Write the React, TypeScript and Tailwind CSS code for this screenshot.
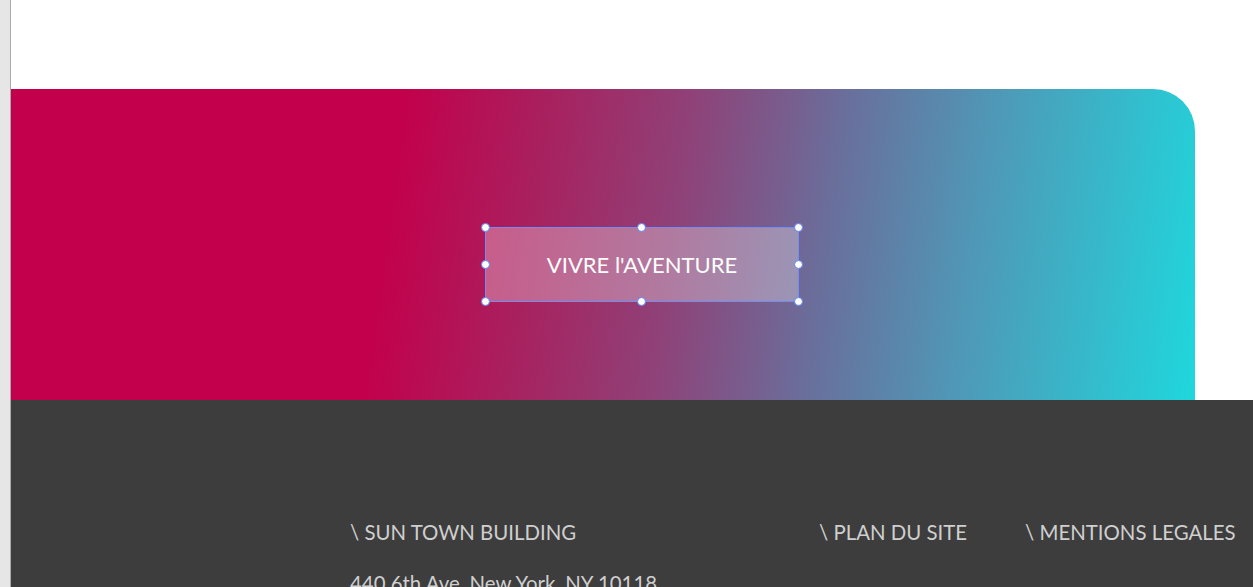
import React from "react";

const Handle = ({ className }: { className: string }) => (
  <span
    className={`absolute w-[9px] h-[9px] rounded-full bg-white border border-[#5b7ff0] ${className}`}
  />
);

export default function App() {
  return (
    <div
      className="flex w-[1253px] h-[587px] overflow-hidden bg-white"
      style={{ fontFamily: "Lato, 'Open Sans', sans-serif" }}
    >
      <div className="w-[11px] shrink-0 bg-[#e6e6e6] border-r border-[#a9a9a9]" />
      <div className="flex flex-col flex-1">
        <div className="h-[89px] shrink-0 bg-white" />
        <div
          className="h-[311px] shrink-0 w-[1184px] rounded-tr-[42px] pl-[474px] pt-[138px]"
          style={{
            background:
              "linear-gradient(98deg, #c3004b 0%, #c3004b 32%, #a8215f 44%, #8e4379 56%, #6a6e9b 68%, #4e9ab8 81%, #1fd7dd 100%)",
          }}
        >
          <div className="relative w-[314px] h-[75px] border border-[#6f8df5] bg-white/30 flex items-center justify-center">
            <span className="text-white text-[22px] leading-none pt-[1px]">
              VIVRE l'AVENTURE
            </span>
            <Handle className="-left-[5px] -top-[5px]" />
            <Handle className="left-[151px] -top-[5px]" />
            <Handle className="-right-[5px] -top-[5px]" />
            <Handle className="-left-[5px] top-[32px]" />
            <Handle className="-right-[5px] top-[32px]" />
            <Handle className="-left-[5px] -bottom-[5px]" />
            <Handle className="left-[151px] -bottom-[5px]" />
            <Handle className="-right-[5px] -bottom-[5px]" />
          </div>
        </div>
        <div className="flex-1 bg-[#3d3d3d] pt-[122px] text-[#cfcfcf] text-[20.4px] leading-none">
          <div className="flex">
            <div className="ml-[339px] w-[469px] flex flex-col gap-[31px]">
              <span>\ SUN TOWN BUILDING</span>
              <span>440 6th Ave, New York, NY 10118</span>
            </div>
            <span>\ PLAN DU SITE</span>
            <span className="ml-[58px]">\ MENTIONS LEGALES</span>
          </div>
        </div>
      </div>
    </div>
  );
}
